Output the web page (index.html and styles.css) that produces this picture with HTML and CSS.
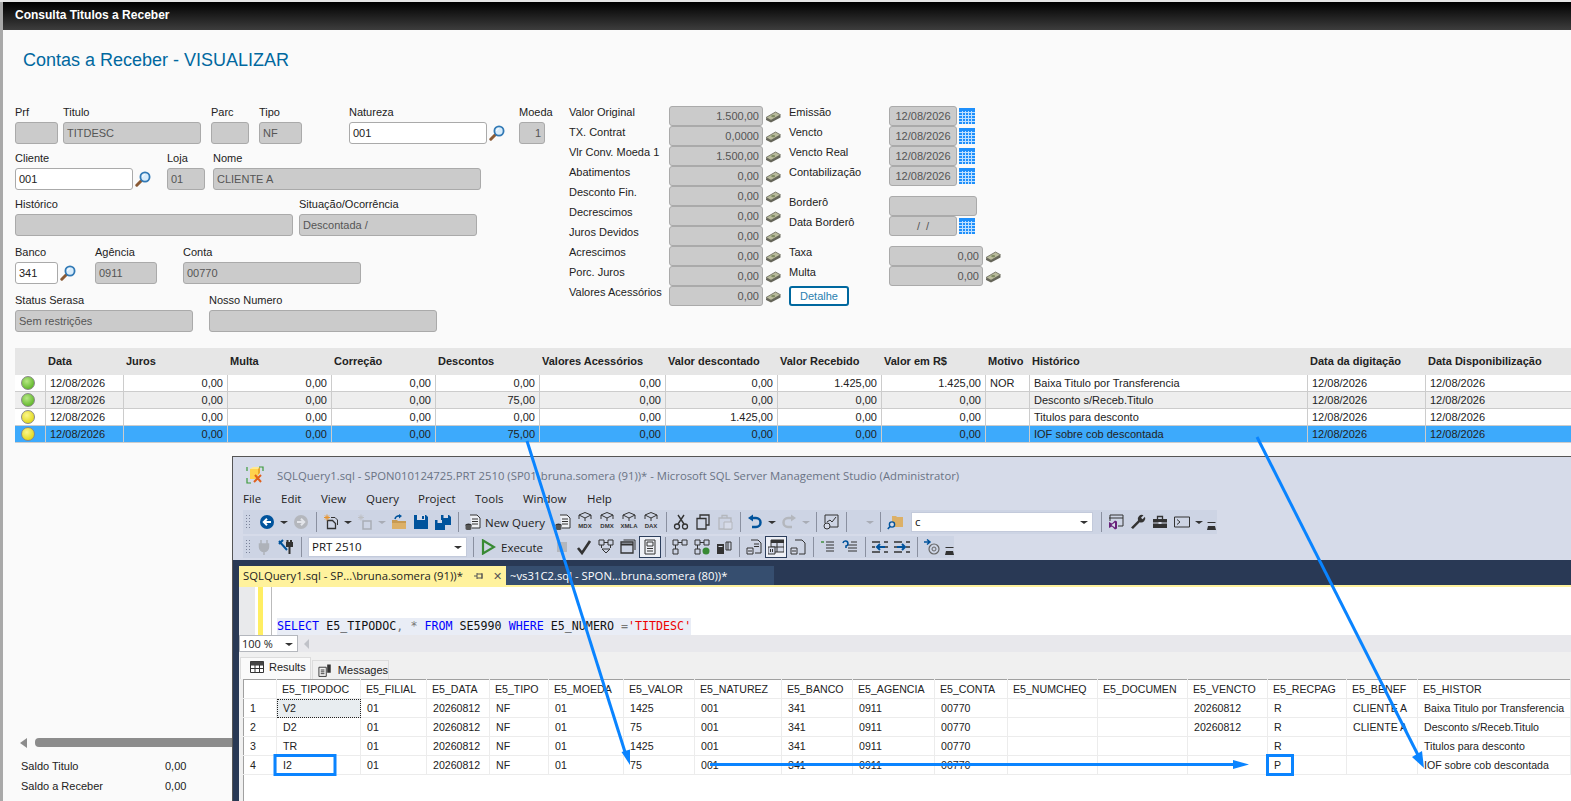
FILE: index.html
```html
<!DOCTYPE html>
<html lang="pt-BR">
<head>
    <meta charset="UTF-8">
    <title>Consulta Titulos a Receber</title>
    <link rel="stylesheet" href="styles.css">
</head>
<body>
    <svg class="defs" xmlns="http://www.w3.org/2000/svg">
        <symbol id="i-lupa" viewBox="0 0 16 16"><path d="M6 10 1.800 14.200" stroke="#8a5a35" stroke-width="3" stroke-linecap="round"/><circle cx="10" cy="6" r="4.600" fill="#d8ecfb" stroke="#3179b5" stroke-width="1.800"/><path d="M7.500 6a2.600 2.600 0 0 1 2.400-2.500" fill="none" stroke="#fff"/></symbol>
        <symbol id="i-cash" viewBox="0 0 16 12"><path d="M1 7.500 10.500 2l5 2.500v2L6 11.500 1 9z" fill="#66665a"/><path d="M1 6.500 10.500 1l5 2.800L6 9.300z" fill="#b9bb9c" stroke="#66665a" stroke-width=".8"/><ellipse cx="8.200" cy="5.100" rx="2" ry="1.200" fill="#7f8a62"/></symbol>
        <symbol id="i-cal" viewBox="0 0 16 16"><rect width="16" height="16" fill="#1e8ffb"/><path d="M0 4.500h16M0 7.500h16M0 10.500h16M0 13.500h16M3.500 3v13M6.500 3v13M9.500 3v13M12.500 3v13" stroke="#bfe0ff" stroke-width="1"/></symbol>
        <symbol id="i-app" viewBox="0 0 18 18"><path d="M4 3h8v10H4z" fill="#ffd24d"/><path d="M4 3l3-2h7l-2 2z" fill="#ffe88f"/><path d="M12 3l2-2v6l-2 2z" fill="#e9a82c"/><path d="M1 12v5h4M13 1h4v4M1 5V1" fill="none" stroke="#3c9a3c" stroke-width="1.200"/><path d="M8 16l7-7M9 9l6 7" stroke="#e0601c" stroke-width="2"/></symbol>
        <symbol id="i-back" viewBox="0 0 16 16"><circle cx="8" cy="8" r="7" fill="#00539c"/><path d="M12 8H5M8 4.800 4.800 8 8 11.200" fill="none" stroke="#fff" stroke-width="2"/></symbol>
        <symbol id="i-fwd" viewBox="0 0 16 16"><circle cx="8" cy="8" r="7" fill="#b4b7bd"/><path d="M4 8h7M8 4.800 11.200 8 8 11.200" fill="none" stroke="#e3e5ea" stroke-width="2"/></symbol>
        <symbol id="i-newp" viewBox="0 0 16 16"><path d="M4.500 14.500V6.500h5l3 3v5z" fill="none" stroke="#333" stroke-width="1.300"/><path d="M8 3.500h4l2.500 2.500v5" fill="none" stroke="#333"/><path d="M4 .5v6M1 3.500h6M2 1.500l4 4M6 1.500l-4 4" stroke="#e8932c"/></symbol>
        <symbol id="i-newg" viewBox="0 0 16 16"><path d="M6 7h8v8H6z" fill="none" stroke="#a9adb5" stroke-width="1.500"/><path d="M4 .5v6M1 3.500h6M2 1.500l4 4M6 1.500l-4 4" stroke="#bdbfc3"/></symbol>
        <symbol id="i-open" viewBox="0 0 16 16"><path d="M1 7h14v8H1z" fill="#dcb067"/><path d="M1 6h5l1 1h8v2H1z" fill="#c79a52"/><path d="M4 5a4 4 0 0 1 5-3" fill="none" stroke="#00539c" stroke-width="1.600"/><path d="M8 0l3 2-3 2.500z" fill="#00539c"/></symbol>
        <symbol id="i-save" viewBox="0 0 16 16"><path d="M1 1h12l2 2v12H1z" fill="#00539c"/><path d="M4 1h8v5H4z" fill="#d6dbe9"/><path d="M9 2h2v3H9z" fill="#00539c"/></symbol>
        <symbol id="i-saveall" viewBox="0 0 16 16"><path d="M6 1h8l2 2v8H6z" fill="#00539c"/><path d="M8.500 1H13v3H8.500z" fill="#d6dbe9"/><path d="M0 6h8l2 2v8H0z" fill="#00539c"/><path d="M2.500 6H7v3H2.500z" fill="#d6dbe9"/></symbol>
        <symbol id="i-nq" viewBox="0 0 16 16"><path d="M5 1h7l3 3v10H7" fill="#eef0f5" stroke="#333"/><path d="M7 5h6M7 7.500h6M7 10h6" stroke="#333"/><ellipse cx="3.500" cy="11" rx="3" ry="1.500" fill="#333"/><path d="M.5 11v3.500a3 1.500 0 0 0 6 0V11z" fill="#555"/></symbol>
        <symbol id="i-cube" viewBox="0 0 16 11"><path d="M8 .5 14 3v4M8 .5 2 3v4M2 3l6 3 6-3M8 6v3" fill="none" stroke="#333"/></symbol>
        <symbol id="i-cut" viewBox="0 0 16 16"><path d="M5 1l6 9M11 1 5 10" stroke="#333" stroke-width="1.400"/><circle cx="4" cy="12.500" r="2.500" fill="none" stroke="#333" stroke-width="1.300"/><circle cx="12" cy="12.500" r="2.500" fill="none" stroke="#333" stroke-width="1.300"/></symbol>
        <symbol id="i-copy" viewBox="0 0 16 16"><path d="M5 4V1h9v10h-3" fill="none" stroke="#333" stroke-width="1.300"/><path d="M2 4.500h9v10.500H2z" fill="none" stroke="#333" stroke-width="1.300"/></symbol>
        <symbol id="i-paste" viewBox="0 0 16 16"><path d="M2 4h12v11H2z" fill="none" stroke="#b4b7bd" stroke-width="1.300"/><path d="M5 4V1.500h5V4" fill="none" stroke="#b4b7bd" stroke-width="1.300"/><path d="M7 8h8v7H7z" fill="#d6dbe9" stroke="#b4b7bd"/></symbol>
        <symbol id="i-undo" viewBox="0 0 16 16"><path d="M4 4h5a4.500 4.500 0 0 1 0 9H5" fill="none" stroke="#00539c" stroke-width="2.500"/><path d="M1 4l5-3.500v7z" fill="#00539c"/></symbol>
        <symbol id="i-redo" viewBox="0 0 16 16"><path d="M12 4H7a4.500 4.500 0 0 0 0 9h4" fill="none" stroke="#b4b7bd" stroke-width="2.500"/><path d="M15 4l-5-3.500v7z" fill="#b4b7bd"/></symbol>
        <symbol id="i-chart" viewBox="0 0 16 16"><path d="M2 1h13v12H7" fill="none" stroke="#333"/><path d="M2 1v8" stroke="#333"/><path d="M4 8l3-2 2 2 4-5" fill="none" stroke="#333"/><circle cx="4" cy="12" r="3" fill="#d6dbe9" stroke="#333"/></symbol>
        <symbol id="i-find" viewBox="0 0 16 16"><path d="M5 2h4l1 1h6v10H5z" fill="#dcb067"/><circle cx="5" cy="10.500" r="2.600" fill="#d6dbe9" stroke="#00539c" stroke-width="1.400"/><path d="M3 12.500.8 15" stroke="#00539c" stroke-width="1.600"/></symbol>
        <symbol id="i-vs" viewBox="0 0 16 16"><path d="M2 1h13v11h-5M2 1v6M1 4h14" fill="none" stroke="#333"/><path d="M1 8l3 1.500 3-3 2 1v7l-2 1-3-3-3 1.500z" fill="#68217a"/><path d="M3.500 11 7 8.500v5z" fill="#d6dbe9"/></symbol>
        <symbol id="i-wrench" viewBox="0 0 16 16"><path d="M1 13.500 8 6.500a4.200 4.200 0 0 1 5.500-5.300L11 3.700l1.500 1.500L15 2.800A4.200 4.200 0 0 1 9.700 8.300L3 15z" fill="#333"/></symbol>
        <symbol id="i-box" viewBox="0 0 16 16"><path d="M1 5h14v9H1z" fill="#333"/><path d="M5.500 5V2.500h5V5" fill="none" stroke="#333" stroke-width="1.300"/><path d="M1 9h14" stroke="#d6dbe9"/><path d="M6.500 8h3v2h-3z" fill="#d6dbe9"/></symbol>
        <symbol id="i-cmd" viewBox="0 0 16 16"><path d="M.5 3h15v10H.5z" fill="none" stroke="#333"/><path d="M3 5.500 6 8l-3 2.500" fill="none" stroke="#333"/></symbol>
        <symbol id="i-plug" viewBox="0 0 16 16"><path d="M5 1v4M11 1v4M3.500 5h9v3a4.500 4.500 0 0 1-9 0zM8 12v4" fill="#aeb2b9" stroke="#aeb2b9" stroke-width="1.500"/></symbol>
        <symbol id="i-plug2" viewBox="0 0 16 16"><path d="M1 2l8 9M5 1l-4 4" stroke="#00539c" stroke-width="2"/><path d="M8 3h7v5h-7z" fill="#333"/><path d="M9.500 1v3M13 1v3M11.500 8v7" stroke="#333" stroke-width="2"/></symbol>
        <symbol id="i-play" viewBox="0 0 16 16"><path d="M3 1.500 14 8 3 14.500z" fill="none" stroke="#388a34" stroke-width="2.200"/></symbol>
        <symbol id="i-stop" viewBox="0 0 16 16"><path d="M3 3h10v10H3z" fill="#b4b7bd"/></symbol>
        <symbol id="i-check" viewBox="0 0 16 16"><path d="M2 9l4 5L14 2" fill="none" stroke="#333" stroke-width="2.600"/></symbol>
        <symbol id="i-plan" viewBox="0 0 16 16"><path d="M1 1h5v5H1zM10 1h5v5h-5zM4 10h8l-4 4z" fill="none" stroke="#333"/><path d="M6 3.500h4M3.500 6v3M12.500 6v3" stroke="#333"/></symbol>
        <symbol id="i-plan2" viewBox="0 0 16 16"><path d="M1 1h5v5H1zM10 1h5v5h-5zM1 10h5v5H1z" fill="none" stroke="#333"/><path d="M6 3.500h4M3.500 6v4" stroke="#333"/><circle cx="12" cy="12" r="3.500" fill="#388a34"/></symbol>
        <symbol id="i-plan3" viewBox="0 0 16 16"><path d="M1 1h5v5H1zM10 1h5v5h-5zM1 10h5v5H1z" fill="none" stroke="#333"/><path d="M6 3.500h4M3.500 6v4" stroke="#333"/></symbol>
        <symbol id="i-panel" viewBox="0 0 16 16"><path d="M1 3h12v11H1z" fill="none" stroke="#333" stroke-width="1.300"/><path d="M3.500 1H15v10" fill="none" stroke="#333"/><path d="M1 5.500h12" stroke="#333" stroke-width="2"/></symbol>
        <symbol id="i-calc" viewBox="0 0 16 16"><path d="M3 1h10v14H3z" fill="none" stroke="#333"/><path d="M5 3h6v4H5zM5 9.500h6M5 12h6" fill="none" stroke="#333"/></symbol>
        <symbol id="i-srv" viewBox="0 0 16 16"><path d="M1 5h7v10H1z" fill="#333"/><path d="M2.500 7.500h4" stroke="#d6dbe9"/><path d="M10 3h5v8h-5zM12 3v8" fill="none" stroke="#333"/></symbol>
        <symbol id="i-totext" viewBox="0 0 16 16"><path d="M5 1h7l3 3v10H9" fill="none" stroke="#333"/><path d="M8 5h5M8 7.500h5" stroke="#333"/><path d="M1 9h6v6H1z" fill="#d6dbe9" stroke="#333"/><path d="M3 11v2M5 11v2" stroke="#333"/></symbol>
        <symbol id="i-togrid" viewBox="0 0 16 16"><path d="M3 1h13v12H3z" fill="#d6dbe9" stroke="#333"/><path d="M3 1h13v3H3z" fill="#333"/><path d="M9 4v9M3 8h13" stroke="#333"/><path d="M0 8h7v7H0z" fill="#d6dbe9" stroke="#333"/><path d="M2.500 10v3M4.500 10v3" stroke="#333"/></symbol>
        <symbol id="i-tofile" viewBox="0 0 16 16"><path d="M5 1h7l3 3v11H9" fill="none" stroke="#333"/><path d="M1 9h6v6H1z" fill="#d6dbe9" stroke="#333"/><path d="M3 11v2M5 11v2" stroke="#333"/></symbol>
        <symbol id="i-com" viewBox="0 0 16 16"><path d="M6 3h8M6 6h8M6 9h8M6 12h8" stroke="#333"/><path d="M1 3h3" stroke="#388a34" stroke-width="1.400"/></symbol>
        <symbol id="i-uncom" viewBox="0 0 16 16"><path d="M6 6h9M6 9h9M6 12h9M9 3h6" stroke="#333"/><path d="M1 4a2.500 2.500 0 1 1 3 3V9" fill="none" stroke="#00539c" stroke-width="1.600"/></symbol>
        <symbol id="i-out" viewBox="0 0 16 16"><path d="M0 3h8M0 13h8M0 8h3M12 3h4M12 13h4M12 8h4" stroke="#333" stroke-width="1.400"/><path d="M13 8H5M8 5 5 8l3 3" fill="none" stroke="#00539c" stroke-width="2"/></symbol>
        <symbol id="i-in" viewBox="0 0 16 16"><path d="M0 3h8M0 13h8M0 8h3M12 3h4M12 13h4M12 8h4" stroke="#333" stroke-width="1.400"/><path d="M3 8h8M8 5l3 3-3 3" fill="none" stroke="#00539c" stroke-width="2"/></symbol>
        <symbol id="i-mail" viewBox="0 0 16 16"><path d="M0 3h6M3 .5 6 3 3 5.500" fill="none" stroke="#00539c" stroke-width="1.500"/><circle cx="10" cy="10" r="5" fill="none" stroke="#666" stroke-width="1.200"/><circle cx="10" cy="10" r="2" fill="none" stroke="#666"/></symbol>
        <symbol id="i-pin" viewBox="0 0 10 10"><path d="M0 5h3M3 2v6M3 3h5v4H3M8 2v6" fill="none" stroke="#555"/></symbol>
        <symbol id="i-grid" viewBox="0 0 14 14"><path d="M.5 1.500h13v11H.5zM.5 5h13M.5 8.500h13M5 1.500v11M9.500 1.500v11" fill="#fff" stroke="#333"/><path d="M.5 1.500h13V5H.5z" fill="#444"/></symbol>
        <symbol id="i-msg" viewBox="0 0 14 14"><path d="M1 4h8v10H1z" fill="none" stroke="#333"/><path d="M3 7h4M3 9h4M3 11h4" stroke="#333"/><path d="M10 1h4v9h-4z" fill="#333"/></symbol>
    </svg>

    <header class="titlebar">Consulta Titulos a Receber</header>

    <main class="page">
        <h1 class="heading">Contas a Receber - VISUALIZAR</h1>

        <div class="form">
            <div class="form-left">
                <div class="row row-1">
                    <div class="field"><label>Prf</label><div class="input w-43"></div></div>
                    <div class="field"><label>Titulo</label><div class="input w-138">TITDESC</div></div>
                    <div class="field"><label>Parc</label><div class="input w-38"></div></div>
                    <div class="field"><label>Tipo</label><div class="input w-43">NF</div></div>
                    <div class="field"><label>Natureza</label><div class="with-icon"><div class="input edit w-138">001</div><svg class="lupa"><use href="#i-lupa"/></svg></div></div>
                    <div class="field"><label>Moeda</label><div class="input w-26 right">1</div></div>
                </div>
                <div class="row row-2">
                    <div class="field"><label>Cliente</label><div class="with-icon"><div class="input edit w-118">001</div><svg class="lupa"><use href="#i-lupa"/></svg></div></div>
                    <div class="field"><label>Loja</label><div class="input w-38">01</div></div>
                    <div class="field"><label>Nome</label><div class="input w-268">CLIENTE A</div></div>
                </div>
                <div class="row row-3">
                    <div class="field"><label>Histórico</label><div class="input w-278"></div></div>
                    <div class="field"><label>Situação/Ocorrência</label><div class="input w-178">Descontada /</div></div>
                </div>
                <div class="row row-4">
                    <div class="field"><label>Banco</label><div class="with-icon"><div class="input edit w-43">341</div><svg class="lupa"><use href="#i-lupa"/></svg></div></div>
                    <div class="field"><label>Agência</label><div class="input w-62">0911</div></div>
                    <div class="field"><label>Conta</label><div class="input w-178">00770</div></div>
                </div>
                <div class="row row-5">
                    <div class="field"><label>Status Serasa</label><div class="input w-178">Sem restrições</div></div>
                    <div class="field"><label>Nosso Numero</label><div class="input w-228"></div></div>
                </div>
            </div>

            <div class="form-values">
                <div class="vrow"><span class="vlabel">Valor Original</span><div class="input small w-94 right">1.500,00</div><svg class="cash"><use href="#i-cash"/></svg></div>
                <div class="vrow"><span class="vlabel">TX. Contrat</span><div class="input small w-94 right">0,0000</div><svg class="cash"><use href="#i-cash"/></svg></div>
                <div class="vrow"><span class="vlabel">Vlr Conv. Moeda 1</span><div class="input small w-94 right">1.500,00</div><svg class="cash"><use href="#i-cash"/></svg></div>
                <div class="vrow"><span class="vlabel">Abatimentos</span><div class="input small w-94 right">0,00</div><svg class="cash"><use href="#i-cash"/></svg></div>
                <div class="vrow"><span class="vlabel">Desconto Fin.</span><div class="input small w-94 right">0,00</div><svg class="cash"><use href="#i-cash"/></svg></div>
                <div class="vrow"><span class="vlabel">Decrescimos</span><div class="input small w-94 right">0,00</div><svg class="cash"><use href="#i-cash"/></svg></div>
                <div class="vrow"><span class="vlabel">Juros Devidos</span><div class="input small w-94 right">0,00</div><svg class="cash"><use href="#i-cash"/></svg></div>
                <div class="vrow"><span class="vlabel">Acrescimos</span><div class="input small w-94 right">0,00</div><svg class="cash"><use href="#i-cash"/></svg></div>
                <div class="vrow"><span class="vlabel">Porc. Juros</span><div class="input small w-94 right">0,00</div><svg class="cash"><use href="#i-cash"/></svg></div>
                <div class="vrow"><span class="vlabel">Valores Acessórios</span><div class="input small w-94 right">0,00</div><svg class="cash"><use href="#i-cash"/></svg></div>
            </div>

            <div class="form-dates">
                <div class="vrow"><span class="vlabel">Emissão</span><div class="input small w-68 center">12/08/2026</div><svg class="cal"><use href="#i-cal"/></svg></div>
                <div class="vrow"><span class="vlabel">Vencto</span><div class="input small w-68 center">12/08/2026</div><svg class="cal"><use href="#i-cal"/></svg></div>
                <div class="vrow"><span class="vlabel">Vencto Real</span><div class="input small w-68 center">12/08/2026</div><svg class="cal"><use href="#i-cal"/></svg></div>
                <div class="vrow"><span class="vlabel">Contabilização</span><div class="input small w-68 center">12/08/2026</div><svg class="cal"><use href="#i-cal"/></svg></div>
                <div class="vrow spaced"><span class="vlabel">Borderô</span><div class="input small w-88"></div></div>
                <div class="vrow"><span class="vlabel">Data Borderô</span><div class="input small w-68 center">/ &nbsp;/</div><svg class="cal"><use href="#i-cal"/></svg></div>
                <div class="vrow spaced"><span class="vlabel">Taxa</span><div class="input small w-94 right">0,00</div><svg class="cash"><use href="#i-cash"/></svg></div>
                <div class="vrow"><span class="vlabel">Multa</span><div class="input small w-94 right">0,00</div><svg class="cash"><use href="#i-cash"/></svg></div>
                <div class="vrow"><button class="btn" type="button">Detalhe</button></div>
            </div>
        </div>

        <table class="baixas">
            <colgroup>
                <col class="c30"><col class="c78"><col class="c104"><col class="c104"><col class="c104"><col class="c104"><col class="c126"><col class="c112"><col class="c104"><col class="c104"><col class="c44"><col class="c278"><col class="c118"><col class="c146">
            </colgroup>
            <thead>
                <tr><th></th><th>Data</th><th>Juros</th><th>Multa</th><th>Correção</th><th>Descontos</th><th>Valores Acessórios</th><th>Valor descontado</th><th>Valor Recebido</th><th>Valor em R$</th><th>Motivo</th><th>Histórico</th><th>Data da digitação</th><th>Data Disponibilização</th></tr>
            </thead>
            <tbody>
                <tr><td><span class="led green"></span></td><td>12/08/2026</td><td class="num">0,00</td><td class="num">0,00</td><td class="num">0,00</td><td class="num">0,00</td><td class="num">0,00</td><td class="num">0,00</td><td class="num">1.425,00</td><td class="num">1.425,00</td><td>NOR</td><td>Baixa Titulo por Transferencia</td><td>12/08/2026</td><td>12/08/2026</td></tr>
                <tr class="alt"><td><span class="led green"></span></td><td>12/08/2026</td><td class="num">0,00</td><td class="num">0,00</td><td class="num">0,00</td><td class="num">75,00</td><td class="num">0,00</td><td class="num">0,00</td><td class="num">0,00</td><td class="num">0,00</td><td></td><td>Desconto s/Receb.Titulo</td><td>12/08/2026</td><td>12/08/2026</td></tr>
                <tr><td><span class="led yellow"></span></td><td>12/08/2026</td><td class="num">0,00</td><td class="num">0,00</td><td class="num">0,00</td><td class="num">0,00</td><td class="num">0,00</td><td class="num">1.425,00</td><td class="num">0,00</td><td class="num">0,00</td><td></td><td>Titulos para desconto</td><td>12/08/2026</td><td>12/08/2026</td></tr>
                <tr class="selected"><td><span class="led yellow"></span></td><td>12/08/2026</td><td class="num">0,00</td><td class="num">0,00</td><td class="num">0,00</td><td class="num">75,00</td><td class="num">0,00</td><td class="num">0,00</td><td class="num">0,00</td><td class="num">0,00</td><td></td><td>IOF sobre cob descontada</td><td>12/08/2026</td><td>12/08/2026</td></tr>
            </tbody>
        </table>

        <div class="scroll"><span class="scroll-arrow"></span><span class="scroll-thumb"></span></div>

        <div class="saldo"><span>Saldo Titulo</span><span>0,00</span></div>
        <div class="saldo"><span>Saldo a Receber</span><span>0,00</span></div>
    </main>

    <!-- ssms window pasted over the page -->
    <section class="ssms">
        <div class="ssms-title"><svg class="app"><use href="#i-app"/></svg>SQLQuery1.sql - SPON010124725.PRT 2510 (SP01\bruna.somera (91))* - Microsoft SQL Server Management Studio (Administrator)</div>
        <nav class="ssms-menu"><span class="m-file">File</span><span class="m-edit">Edit</span><span class="m-view">View</span><span class="m-query">Query</span><span class="m-project">Project</span><span class="m-tools">Tools</span><span class="m-window">Window</span><span>Help</span></nav>

        <div class="toolbar tb-one">
            <span class="grip"></span>
            <span class="tb"><svg><use href="#i-back"/></svg></span><span class="dd"></span>
            <span class="tb"><svg><use href="#i-fwd"/></svg></span><span class="sep"></span>
            <span class="tb"><svg><use href="#i-newp"/></svg></span><span class="dd"></span>
            <span class="tb"><svg><use href="#i-newg"/></svg></span><span class="dd off"></span>
            <span class="tb"><svg><use href="#i-open"/></svg></span>
            <span class="tb"><svg><use href="#i-save"/></svg></span>
            <span class="tb"><svg><use href="#i-saveall"/></svg></span><span class="sep"></span>
            <span class="tb"><svg><use href="#i-nq"/></svg></span><span class="tb-text nq">New Query</span>
            <span class="tb"><svg><use href="#i-nq"/></svg></span>
            <span class="tb cube"><svg><use href="#i-cube"/></svg><b>MDX</b></span>
            <span class="tb cube"><svg><use href="#i-cube"/></svg><b>DMX</b></span>
            <span class="tb cube"><svg><use href="#i-cube"/></svg><b>XMLA</b></span>
            <span class="tb cube"><svg><use href="#i-cube"/></svg><b>DAX</b></span><span class="sep"></span>
            <span class="tb"><svg><use href="#i-cut"/></svg></span>
            <span class="tb"><svg><use href="#i-copy"/></svg></span>
            <span class="tb"><svg><use href="#i-paste"/></svg></span><span class="sep"></span>
            <span class="tb"><svg><use href="#i-undo"/></svg></span><span class="dd"></span>
            <span class="tb"><svg><use href="#i-redo"/></svg></span><span class="dd off"></span><span class="sep"></span>
            <span class="tb"><svg><use href="#i-chart"/></svg></span><span class="sep"></span>
            <span class="blank"></span><span class="dd off"></span><span class="sep"></span>
            <span class="tb"><svg><use href="#i-find"/></svg></span>
            <span class="combo find">c<span class="dd"></span></span><span class="sep"></span>
            <span class="tb"><svg><use href="#i-vs"/></svg></span>
            <span class="tb"><svg><use href="#i-wrench"/></svg></span>
            <span class="tb"><svg><use href="#i-box"/></svg></span>
            <span class="tb"><svg><use href="#i-cmd"/></svg></span><span class="dd"></span>
            <span class="more"></span>
        </div>

        <div class="toolbar tb-two">
            <span class="grip"></span>
            <span class="tb"><svg><use href="#i-plug"/></svg></span>
            <span class="tb"><svg><use href="#i-plug2"/></svg></span><span class="sep"></span>
            <span class="combo db">PRT 2510<span class="dd"></span></span><span class="sep"></span>
            <span class="tb"><svg><use href="#i-play"/></svg></span><span class="tb-text exec">Execute</span>
            <span class="tb"><svg><use href="#i-stop"/></svg></span>
            <span class="tb"><svg><use href="#i-check"/></svg></span>
            <span class="tb"><svg><use href="#i-plan"/></svg></span>
            <span class="tb"><svg><use href="#i-panel"/></svg></span>
            <span class="tb active"><svg><use href="#i-calc"/></svg></span><span class="sep"></span>
            <span class="tb"><svg><use href="#i-plan3"/></svg></span>
            <span class="tb"><svg><use href="#i-plan2"/></svg></span>
            <span class="tb"><svg><use href="#i-srv"/></svg></span><span class="sep"></span>
            <span class="tb"><svg><use href="#i-totext"/></svg></span>
            <span class="tb active"><svg><use href="#i-togrid"/></svg></span>
            <span class="tb"><svg><use href="#i-tofile"/></svg></span><span class="sep"></span>
            <span class="tb"><svg><use href="#i-com"/></svg></span>
            <span class="tb"><svg><use href="#i-uncom"/></svg></span><span class="sep"></span>
            <span class="tb"><svg><use href="#i-out"/></svg></span>
            <span class="tb"><svg><use href="#i-in"/></svg></span><span class="sep"></span>
            <span class="tb"><svg><use href="#i-mail"/></svg></span>
            <span class="more"></span>
        </div>

        <div class="workspace">
            <div class="tabs">
                <div class="tab on">SQLQuery1.sql - SP...\bruna.somera (91))*<svg class="pin"><use href="#i-pin"/></svg><span class="close">✕</span></div>
                <div class="tab">~vs31C2.sql - SPON...bruna.somera (80))*</div>
            </div>
            <div class="editor">
                <div class="gutter"></div><div class="mark"></div><div class="gap"></div>
                <code class="sql"><span class="kw">SELECT</span> E5_TIPODOC<span class="op">,</span> <span class="op">*</span> <span class="kw">FROM</span> SE5990 <span class="kw">WHERE</span> E5_NUMERO <span class="op">=</span><span class="str">'TITDESC'</span></code>
            </div>
            <div class="zoombar"><span class="zoom-box">100 %<span class="dd"></span></span><span class="zoom-left"></span></div>
            <div class="results">
                <div class="res-tabs">
                    <div class="res-tab on"><svg><use href="#i-grid"/></svg>Results</div>
                    <div class="res-tab"><svg><use href="#i-msg"/></svg>Messages</div>
                </div>
                <table class="grid">
                    <colgroup>
                        <col class="g33"><col class="g84"><col class="g66"><col class="g63"><col class="g59"><col class="g75"><col class="g71"><col class="g87"><col class="g71"><col class="g82"><col class="g73"><col class="g90"><col class="g90"><col class="g80"><col class="g79"><col class="g71"><col class="g153">
                    </colgroup>
                    <thead>
                        <tr><th></th><th>E5_TIPODOC</th><th>E5_FILIAL</th><th>E5_DATA</th><th>E5_TIPO</th><th>E5_MOEDA</th><th>E5_VALOR</th><th>E5_NATUREZ</th><th>E5_BANCO</th><th>E5_AGENCIA</th><th>E5_CONTA</th><th>E5_NUMCHEQ</th><th>E5_DOCUMEN</th><th>E5_VENCTO</th><th>E5_RECPAG</th><th>E5_BENEF</th><th>E5_HISTOR</th></tr>
                    </thead>
                    <tbody>
                        <tr><td>1</td><td class="focus">V2</td><td>01</td><td>20260812</td><td>NF</td><td>01</td><td>1425</td><td>001</td><td>341</td><td>0911</td><td>00770</td><td></td><td></td><td>20260812</td><td>R</td><td>CLIENTE A</td><td>Baixa Titulo por Transferencia</td></tr>
                        <tr><td>2</td><td>D2</td><td>01</td><td>20260812</td><td>NF</td><td>01</td><td>75</td><td>001</td><td>341</td><td>0911</td><td>00770</td><td></td><td></td><td>20260812</td><td>R</td><td>CLIENTE A</td><td>Desconto s/Receb.Titulo</td></tr>
                        <tr><td>3</td><td>TR</td><td>01</td><td>20260812</td><td>NF</td><td>01</td><td>1425</td><td>001</td><td>341</td><td>0911</td><td>00770</td><td></td><td></td><td></td><td>R</td><td></td><td>Titulos para desconto</td></tr>
                        <tr><td>4</td><td>I2</td><td>01</td><td>20260812</td><td>NF</td><td>01</td><td>75</td><td>001</td><td>341</td><td>0911</td><td>00770</td><td></td><td></td><td></td><td>P</td><td></td><td>IOF sobre cob descontada</td></tr>
                    </tbody>
                </table>
            </div>
        </div>
    </section>

    <!-- blue notes drawn over everything -->
    <svg class="notes" viewBox="0 0 1571 801" xmlns="http://www.w3.org/2000/svg">
        <g fill="none" stroke="#0a84ff">
            <path d="M527 441 625 752" stroke-width="3"/>
            <path d="M1257 437 1418 755" stroke-width="3"/>
            <path d="M710 764.500H1236" stroke-width="3"/>
            <rect x="275" y="755.500" width="60" height="19" stroke-width="3"/>
            <rect x="1267.500" y="755.500" width="25" height="19" stroke-width="3"/>
        </g>
        <g fill="#0a84ff">
            <path d="M630 765 621.500 752 630 749.500z"/>
            <path d="M1424 768 1412 757 1422 751z"/>
            <path d="M1249 764.500 1233 760V769z"/>
        </g>
    </svg>
</body>
</html>
```

FILE: styles.css
```css
* {
    box-sizing: border-box;
}
html {
    background: #a9a9a9;
}
body {
    position: relative;
    width: 1571px;
    height: 801px;
    margin: 0;
    padding: 2px 0 0 3px;
    overflow: hidden;
    font-family: "Liberation Sans", Arial, sans-serif;
    font-size: 11px;
    color: #222;
    background: linear-gradient(#e6e6e6, #e6e6e6) top / 100% 2px no-repeat, linear-gradient(90deg, #a9a9a9 3px, #fafafa 3px);
}
.defs {
    display: none;
}

/* top bar */
.titlebar {
    height: 28px;
    padding-left: 12px;
    line-height: 27px;
    font-size: 12px;
    font-weight: 700;
    color: #fff;
    background: linear-gradient(#000, #3d3d3d);
}
.page {
    height: 771px;
    background: #fafafa;
}
.heading {
    margin: 0;
    padding: 19px 0 33px 20px;
    font-size: 18px;
    line-height: 22px;
    font-weight: 400;
    color: #00689f;
}

/* form */
.form {
    display: flex;
    height: 244px;
    padding-left: 12px;
}
.form-left {
    width: 554px;
}
.form-values {
    width: 220px;
    padding-top: 2px;
}
.form-dates {
    padding-top: 2px;
}
.row {
    display: grid;
    margin-bottom: 6px;
}
.row-3,
.row-4 {
    margin-bottom: 8px;
}
.row-1 {
    grid-template-columns: 48px 148px 48px 90px 170px auto;
}
.row-2 {
    grid-template-columns: 152px 46px auto;
}
.row-3 {
    grid-template-columns: 284px auto;
}
.row-4 {
    grid-template-columns: 80px 88px auto;
}
.row-5 {
    grid-template-columns: 194px auto;
}
.field label {
    display: block;
    height: 18px;
    line-height: 16px;
}
.with-icon {
    display: flex;
    align-items: center;
}
.input {
    height: 22px;
    padding: 0 3px;
    line-height: 20px;
    font-size: 11px;
    color: #555;
    background: #cbcbcb;
    border: 1px solid #aaa;
    border-radius: 3px;
    white-space: nowrap;
}
.input.edit {
    color: #222;
    background: #fff;
}
.input.small {
    height: 20px;
    line-height: 18px;
    font-size: 11px;
}
.right {
    text-align: right;
}
.center {
    text-align: center;
}
.w-26 { width: 26px; }
.w-38 { width: 38px; }
.w-43 { width: 43px; }
.w-62 { width: 62px; }
.w-68 { width: 68px; }
.w-88 { width: 88px; }
.w-94 { width: 94px; }
.w-118 { width: 118px; }
.w-138 { width: 138px; }
.w-178 { width: 178px; }
.w-228 { width: 228px; }
.w-268 { width: 268px; }
.w-278 { width: 278px; }
.lupa {
    width: 16px;
    height: 16px;
    margin-left: 2px;
}
.vrow {
    display: flex;
    height: 20px;
}
.spaced {
    margin-top: 10px;
}
.vlabel {
    width: 100px;
    line-height: 12px;
}
.cash {
    width: 16px;
    height: 12px;
    margin: 5px 0 0 2px;
}
.cal {
    width: 16px;
    height: 16px;
    margin: 2px 0 0 2px;
}
.btn {
    width: 60px;
    height: 20px;
    padding: 0;
    font: 11px "Liberation Sans", Arial, sans-serif;
    color: #2b7fb0;
    background: #fff;
    border: 2px solid #00689f;
    border-radius: 3px;
}

/* baixas table */
.baixas {
    width: 1556px;
    margin-left: 12px;
    table-layout: fixed;
    border-collapse: separate;
    border-spacing: 0;
}
.c30 { width: 30px; }
.c44 { width: 44px; }
.c78 { width: 78px; }
.c104 { width: 104px; }
.c112 { width: 112px; }
.c118 { width: 118px; }
.c126 { width: 126px; }
.c146 { width: 146px; }
.c278 { width: 278px; }
.baixas th {
    height: 27px;
    padding: 0 0 2px 3px;
    text-align: left;
    font-size: 11px;
    color: #222;
    background: #e6e6e6;
    white-space: nowrap;
}
.baixas td {
    height: 17px;
    padding: 0 4px;
    line-height: 14px;
    color: #222;
    background: #fff;
    border-bottom: 1px solid #ccc;
    border-left: 1px solid #ccc;
    white-space: nowrap;
}
.baixas td:first-child {
    padding: 0 0 0 6px;
    border-left: 0;
}
.baixas td.num {
    text-align: right;
}
.baixas .alt td {
    background: #eee;
}
.baixas .selected td {
    background: #3daafc;
}
.led {
    display: block;
    width: 14px;
    height: 14px;
    border: 1px solid #888;
    border-radius: 50%;
}
.led.green {
    background: radial-gradient(circle at 40% 35%, #b7e884, #62b82c 75%);
}
.led.yellow {
    background: radial-gradient(circle at 40% 35%, #fbf68c, #e2d91c 75%);
}

/* bottom of page */
.scroll {
    display: flex;
    align-items: center;
    height: 9px;
    margin: 295px 0 9px 17px;
}
.scroll-arrow {
    width: 0;
    height: 0;
    margin-right: 8px;
    border-top: 5px solid transparent;
    border-bottom: 5px solid transparent;
    border-right: 7px solid #8c8c8c;
}
.scroll-thumb {
    width: 300px;
    height: 9px;
    background: #8c8c8c;
    border-radius: 4px;
}
.saldo {
    display: flex;
    height: 20px;
    padding-left: 18px;
    line-height: 20px;
}
.saldo span:first-child {
    width: 144px;
}

/* ssms window */
.ssms {
    position: absolute;
    left: 232px;
    top: 456px;
    width: 1339px;
    height: 345px;
    font-family: "Open Sans", sans-serif;
    color: #222;
    background: #d6dbe9;
    border-top: 1px solid #555;
    border-left: 1px solid #555;
}
.ssms-title {
    display: flex;
    align-items: center;
    height: 36px;
    padding-left: 13px;
    font-size: 11.300px;
    color: #6a7384;
    white-space: nowrap;
}
.app {
    width: 18px;
    height: 18px;
    margin-right: 13px;
}
.ssms-menu {
    display: flex;
    height: 14px;
    padding-left: 10px;
    font-size: 11.500px;
    line-height: 12px;
}
.ssms-menu span {
    flex: none;
}
.m-file { width: 38px; }
.m-edit { width: 40px; }
.m-view { width: 45px; }
.m-query { width: 52px; }
.m-project { width: 57px; }
.m-tools { width: 48px; }
.m-window { width: 64px; }
.toolbar {
    display: flex;
    align-items: center;
    margin-left: 10px;
    background: #cdd4e4;
}
.tb-one {
    width: 974px;
    height: 24px;
    margin-top: 3px;
}
.tb-two {
    width: 711px;
    height: 22px;
    margin-top: 2px;
}
.grip {
    flex: none;
    width: 6px;
    height: 16px;
    margin: 0 5px 0 2px;
    background: radial-gradient(circle, #7a8299 .7px, transparent 1px) 0 0 / 3px 3px;
}
.tb-two .grip {
    margin-right: 2px;
}
.tb {
    position: relative;
    display: flex;
    flex: none;
    align-items: center;
    justify-content: center;
    width: 22px;
    height: 22px;
}
.tb svg {
    width: 16px;
    height: 16px;
}
.tb.active {
    background: #eef0f6;
    border: 1px solid #2c3e5c;
}
.tb.cube {
    display: block;
    padding-top: 1px;
    text-align: center;
}
.tb.cube svg {
    display: block;
    height: 11px;
    margin: 0 auto;
}
.tb.cube b {
    display: block;
    font: 700 6px/7px "Liberation Sans", sans-serif;
    color: #333;
}
.dd {
    position: relative;
    flex: none;
    width: 12px;
    height: 3px;
}
.dd::after {
    content: "";
    position: absolute;
    left: 2px;
    top: 0;
    border-top: 3px solid #333;
    border-left: 4px solid transparent;
    border-right: 4px solid transparent;
}
.dd.off::after {
    border-top-color: #a8acb5;
}
.sep {
    flex: none;
    width: 8px;
    height: 20px;
    background: linear-gradient(#8a90a0, #8a90a0) center / 1px 100% no-repeat;
}
.tb-text {
    flex: none;
    font-size: 11.500px;
    color: #222;
}
.tb-text.nq {
    width: 68px;
    padding-left: 1px;
}
.tb-text.exec {
    width: 52px;
    padding-left: 2px;
}
.blank {
    flex: none;
    width: 14px;
}
.combo {
    position: relative;
    display: block;
    flex: none;
    height: 20px;
    padding-left: 3px;
    line-height: 18px;
    font-size: 11.500px;
    color: #111;
    background: #fff;
    border: 1px solid #c3cadb;
}
.combo .dd {
    position: absolute;
    right: 2px;
    top: 8px;
}
.combo.find {
    width: 182px;
    margin: 0 4px 0 5px;
}
.combo.db {
    width: 159px;
    margin: 0 2px 0 3px;
}
.more {
    flex: none;
    width: 9px;
    height: 8px;
    margin: 8px 0 0 2px;
    border-top: 1px solid #333;
    border-bottom: 4px solid #333;
    border-left: 1px solid transparent;
    border-right: 1px solid transparent;
}

/* tabs and editor */
.workspace {
    height: 241px;
    margin-top: 2px;
    padding-left: 6px;
    overflow: hidden;
    background: #293955;
}
.tabs {
    display: flex;
    height: 27px;
    padding-top: 6px;
    border-bottom: 2px solid #fff29d;
}
.tab {
    display: flex;
    align-items: center;
    width: 268px;
    height: 19px;
    padding-left: 4px;
    font-size: 11.300px;
    color: #fff;
    background: #364e6f;
    white-space: nowrap;
}
.tab.on {
    width: 267px;
    color: #222;
    background: #fff29d;
}
.pin {
    width: 10px;
    height: 10px;
    margin-left: 11px;
}
.close {
    margin-left: 9px;
    color: #555;
}
.editor {
    display: flex;
    height: 48px;
    background: #fff;
}
.gutter {
    width: 16px;
    background: #e9eaec;
}
.mark {
    width: 5px;
    margin-left: 3px;
    background: #ffee62;
}
.gap {
    width: 9px;
    border-right: 1px solid #bbb;
}
.sql {
    align-self: flex-end;
    height: 17px;
    margin-left: 5px;
    font-family: "DejaVu Sans Mono", monospace;
    font-size: 11.670px;
    line-height: 17px;
    color: #111;
    background: #e9edf6;
}
.kw { color: #00f; }
.op { color: #777; }
.str { color: #e00; }
.zoombar {
    display: flex;
    align-items: center;
    height: 17px;
    background: #e8e8ec;
}
.zoom-box {
    position: relative;
    width: 59px;
    height: 17px;
    padding-left: 2px;
    font-size: 11px;
    line-height: 15px;
    background: #fff;
    border: 1px solid #b4b7bd;
}
.zoom-box .dd {
    position: absolute;
    right: 2px;
    top: 7px;
}
.zoom-left {
    margin-left: 6px;
    border-top: 5px solid transparent;
    border-bottom: 5px solid transparent;
    border-right: 5px solid #c0c2c8;
}

/* results */
.results {
    height: 149px;
    padding-left: 4px;
    background: #f0f0f0;
}
.res-tabs {
    display: flex;
    align-items: flex-end;
    height: 27px;
    margin-left: -3px;
}
.res-tab {
    display: flex;
    align-items: center;
    width: 77px;
    height: 19px;
    padding-left: 5px;
    font: 11px "Liberation Sans", sans-serif;
    background: #f0f0f0;
    border: 1px solid #dcdcdc;
    border-bottom: 0;
}
.res-tab svg {
    width: 14px;
    height: 14px;
    margin-right: 7px;
}
.res-tab.on {
    width: 71px;
    height: 22px;
    margin-right: 1px;
    padding: 0 0 3px 9px;
    background: #fafafa;
}
.res-tab.on svg {
    margin-right: 5px;
}
.grid {
    width: 1327px;
    height: 122px;
    table-layout: fixed;
    border-collapse: collapse;
    font: 10.600px "Liberation Sans", sans-serif;
    background: #fff;
    border-top: 1px solid #a0a0a0;
    border-left: 1px solid #a0a0a0;
}
.g33 { width: 33px; }
.g59 { width: 59px; }
.g63 { width: 63px; }
.g66 { width: 66px; }
.g71 { width: 71px; }
.g73 { width: 73px; }
.g75 { width: 75px; }
.g79 { width: 79px; }
.g80 { width: 80px; }
.g82 { width: 82px; }
.g84 { width: 84px; }
.g87 { width: 87px; }
.g90 { width: 90px; }
.g153 { width: 153px; }
.grid thead tr,
.grid tbody tr {
    height: 19px;
}
.grid tbody::after {
    content: "";
    display: table-row;
}
.grid th {
    padding: 0 0 0 5px;
    height: 19px;
    text-align: left;
    font-weight: 400;
    border-right: 1px solid #ececec;
    border-bottom: 1px solid #ececec;
    white-space: nowrap;
    overflow: hidden;
}
.grid td {
    padding: 0 0 0 6px;
    height: 19px;
    border-right: 1px solid #ececec;
    border-bottom: 1px solid #ececec;
    white-space: nowrap;
    overflow: hidden;
}
.grid td.focus {
    background: #e8edf0;
    outline: 1px dotted #222;
    outline-offset: -1px;
}

/* annotations */
.notes {
    position: absolute;
    left: 0;
    top: 0;
    width: 1571px;
    height: 801px;
    pointer-events: none;
}
```
